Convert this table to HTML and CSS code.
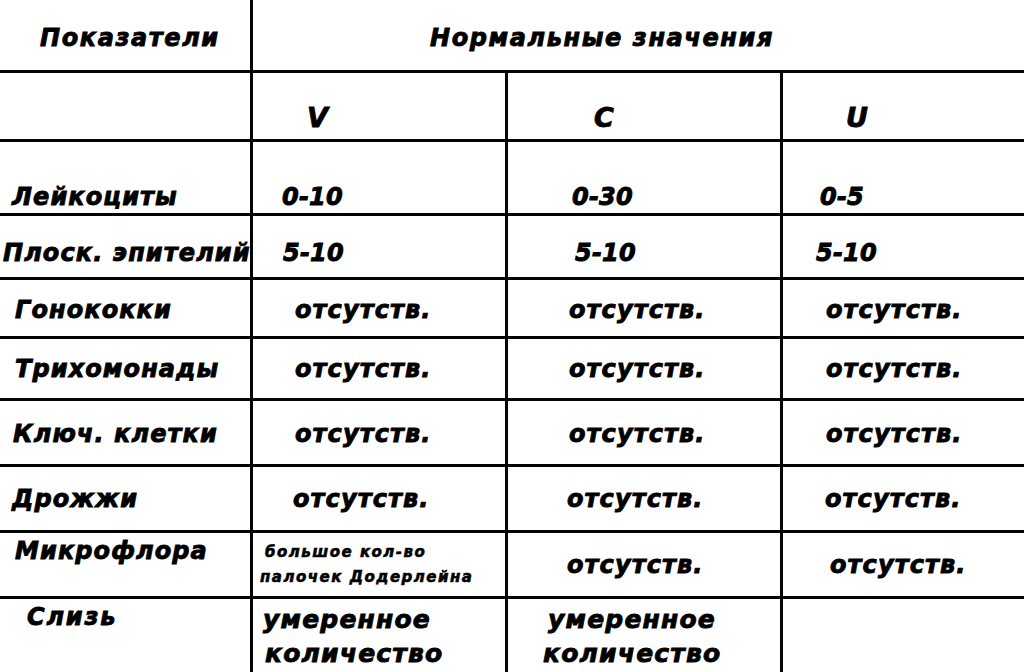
FILE: index.html
```html
<!DOCTYPE html>
<html lang="ru">
<head>
<meta charset="utf-8">
<title>Нормальные значения</title>
<link rel="stylesheet" href="styles.css">
</head>
<body>
<div class="table">
  <div class="cell r1 head c1 pl-40">Показатели</div>
  <div class="cell r1 head span3 pl-177">Нормальные значения</div>

  <div class="cell r2 c1"></div>
  <div class="cell r2 c2 big pl-54">V</div>
  <div class="cell r2 c3 big pl-86">C</div>
  <div class="cell r2 c4 big pl-63">U</div>

  <div class="cell r3 c1 pl-12">Лейкоциты</div>
  <div class="cell r3 c2 num pl-29">0-10</div>
  <div class="cell r3 c3 num pl-64">0-30</div>
  <div class="cell r3 c4 num pl-37">0-5</div>

  <div class="cell r4 c1 pl-3">Плоск. эпителий</div>
  <div class="cell r4 c2 num pl-30">5-10</div>
  <div class="cell r4 c3 num pl-67">5-10</div>
  <div class="cell r4 c4 num pl-33">5-10</div>

  <div class="cell r5 c1">Гонококки</div>
  <div class="cell r5 c2">отсутств.</div>
  <div class="cell r5 c3">отсутств.</div>
  <div class="cell r5 c4">отсутств.</div>

  <div class="cell r6 c1">Трихомонады</div>
  <div class="cell r6 c2">отсутств.</div>
  <div class="cell r6 c3">отсутств.</div>
  <div class="cell r6 c4">отсутств.</div>

  <div class="cell r7 c1 pl-13">Ключ. клетки</div>
  <div class="cell r7 c2">отсутств.</div>
  <div class="cell r7 c3">отсутств.</div>
  <div class="cell r7 c4">отсутств.</div>

  <div class="cell r8 c1 pl-12">Дрожжи</div>
  <div class="cell r8 c2 pl-40">отсутств.</div>
  <div class="cell r8 c3 pl-59">отсутств.</div>
  <div class="cell r8 c4 pl-42">отсутств.</div>

  <div class="cell r9 c1 top">Микрофлора</div>
  <div class="cell r9 c2 small pl-7"><span class="indent">большое кол-во</span><span>палочек Додерлейна</span></div>
  <div class="cell r9 c3 pl-59">отсутств.</div>
  <div class="cell r9 c4 pl-47">отсутств.</div>

  <div class="cell r10 c1 pl-27 top slime">Слизь</div>
  <div class="cell r10 c2 large pl-10"><span>умеренное</span><span class="indent-sm">количество</span></div>
  <div class="cell r10 c3 large pl-35"><span class="indent-md">умеренное</span><span>количество</span></div>
  <div class="cell r10 c4"></div>
</div>
</body>
</html>
```

FILE: styles.css
```css
html, body {
  margin: 0;
  padding: 0;
  background: #ffffff;
}

.table {
  width: 1024px;
  height: 672px;
  display: grid;
  grid-template-columns: 250px 252px 272px 241px;
  grid-template-rows: 70px 66px 71px 61px 56px 59px 63px 63px 63px 73px;
  gap: 3px;
  background: #050505;
  overflow: hidden;
}

.cell {
  background: #ffffff;
  display: flex;
  flex-direction: column;
  justify-content: center;
  white-space: nowrap;
  font-family: "DejaVu Sans", "Liberation Sans", sans-serif;
  font-weight: bold;
  font-style: oblique;
  font-size: 24px;
  letter-spacing: 1.1px;
  line-height: 28px;
  color: #000000;
  -webkit-text-stroke: 0.9px #000000;
  box-sizing: border-box;
}

.span3 { grid-column: 2 / 5; }

/* default column indents */
.c1 { padding-left: 15px; }
.c2 { padding-left: 42px; }
.c3 { padding-left: 61px; }
.c4 { padding-left: 43px; }

.pl-3 { padding-left: 3px; }
.pl-7 { padding-left: 7px; }
.pl-10 { padding-left: 10px; }
.pl-12 { padding-left: 12px; }
.pl-13 { padding-left: 13px; }
.pl-27 { padding-left: 27px; }
.pl-29 { padding-left: 29px; }
.pl-30 { padding-left: 30px; }
.pl-33 { padding-left: 33px; }
.pl-35 { padding-left: 35px; }
.pl-37 { padding-left: 37px; }
.pl-40 { padding-left: 40px; }
.pl-42 { padding-left: 42px; }
.pl-47 { padding-left: 47px; }
.pl-52 { padding-left: 52px; }
.pl-54 { padding-left: 54px; }
.pl-59 { padding-left: 59px; }
.pl-63 { padding-left: 63px; }
.pl-64 { padding-left: 64px; }
.pl-67 { padding-left: 67px; }
.pl-86 { padding-left: 86px; }
.pl-177 { padding-left: 177px; }

/* vertical placement per row */
.r1 { padding-top: 6px; }
.r2 { padding-top: 24px; }
.r3 { padding-top: 39px; }
.r4 { padding-top: 13px; }
.r5 { padding-top: 4px; }
.r6 { padding-top: 0; }
.r7 { padding-top: 3px; }
.r8 { padding-top: 0; }

.top { justify-content: flex-start; }
.r9.top { padding-top: 4px; }
.r10 { justify-content: flex-start; padding-top: 4px; }

.head {
  font-size: 24px;
  letter-spacing: 1.6px;
}

.num {
  letter-spacing: 0.2px;
}

.big {
  font-size: 27px;
}

.slime {
  letter-spacing: 1.8px;
}

.small {
  font-size: 15px;
  line-height: 25px;
  letter-spacing: 1.5px;
  -webkit-text-stroke: 0.6px #000000;
}

.large {
  font-size: 25px;
  line-height: 34px;
  letter-spacing: 1.2px;
}

.indent { padding-left: 5px; }
.indent-sm { padding-left: 2px; }
.indent-md { padding-left: 5px; }
```
